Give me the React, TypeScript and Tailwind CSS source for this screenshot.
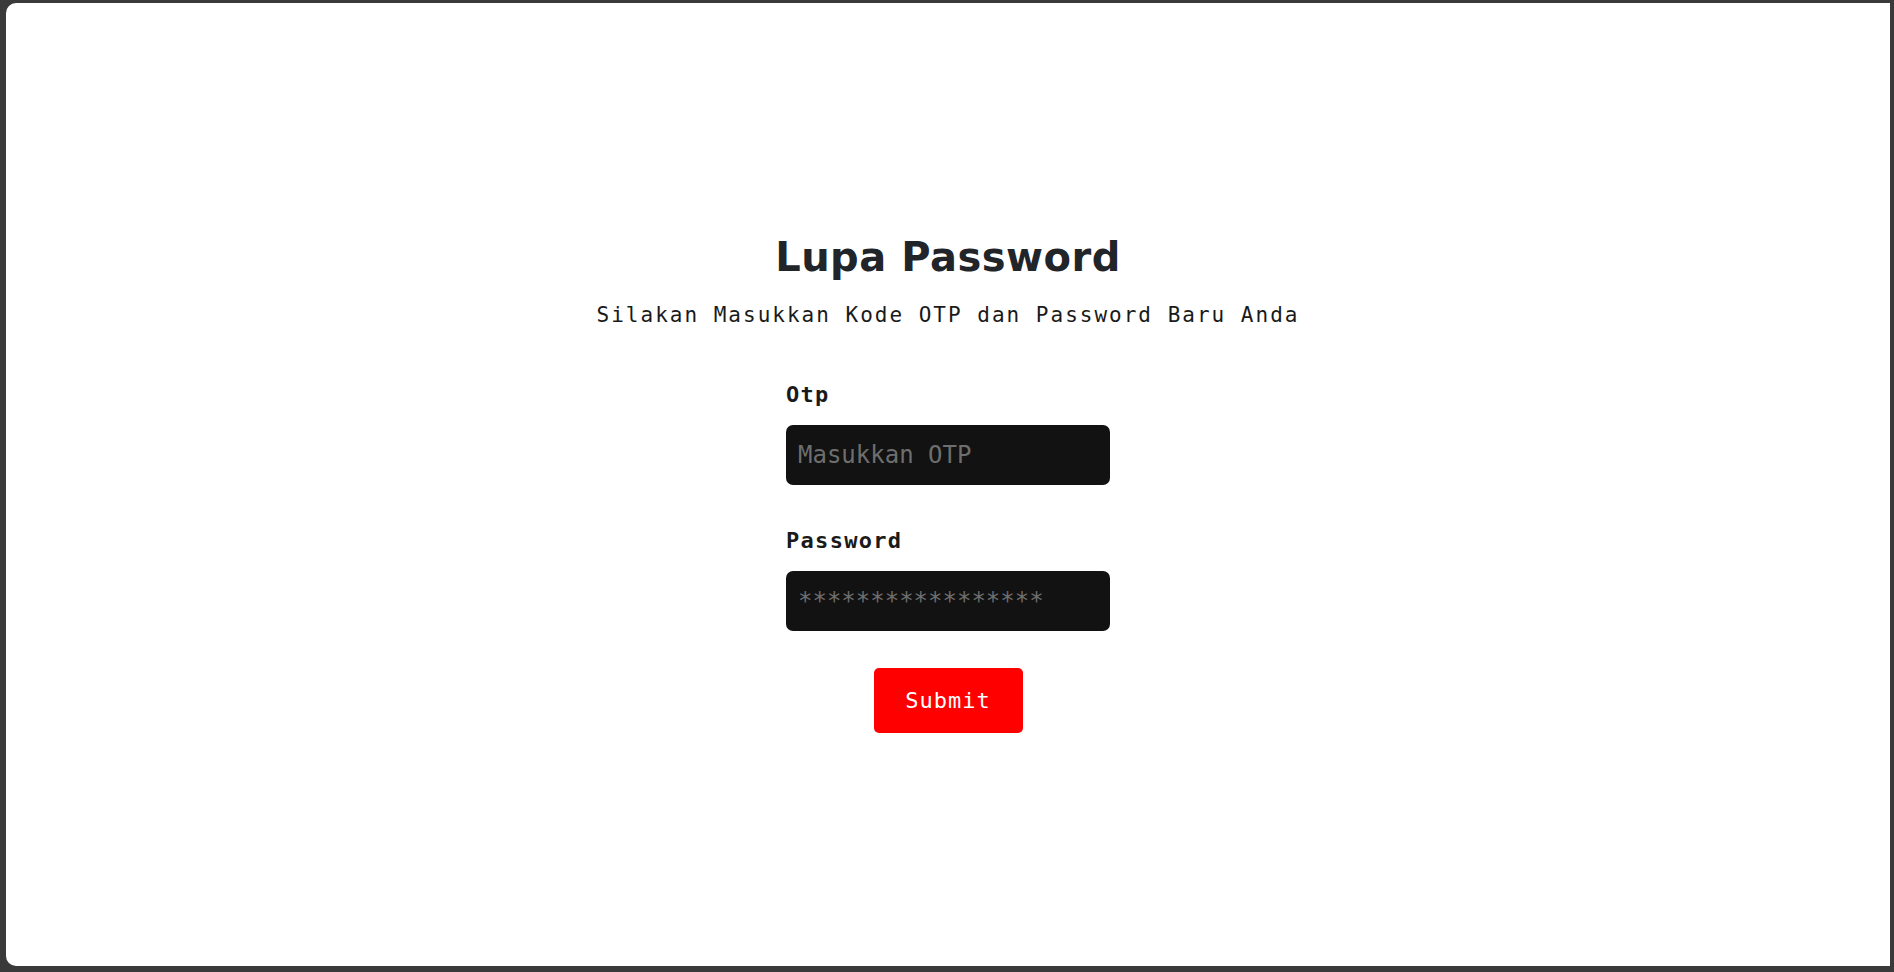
import React, { useState } from 'react';

const mono = "font-['DejaVu_Sans_Mono','Liberation_Mono',monospace]";

const App: React.FC = () => {
  const [otp, setOtp] = useState('');
  const [password, setPassword] = useState('');

  return (
    <div className="h-screen w-full bg-[#3a3a3a] pt-[3px] pl-[6px] pr-[4px] pb-[6px]">
      <div className="h-full w-full bg-white rounded-l-[10px] flex flex-col items-center justify-center">
        {/* Heading */}
        <h1 className="font-['DejaVu_Sans',sans-serif] font-bold text-[40px] leading-[40px] tracking-[0.5px] text-[#212529]">
          Lupa Password
        </h1>
        <p className={`${mono} mt-[26px] text-[21px] leading-[24px] tracking-[2px] text-[#1a1a1a]`}>
          Silakan Masukkan Kode OTP dan Password Baru Anda
        </p>

        {/* Form */}
        <form className="mt-[56px] w-[324px] flex flex-col" onSubmit={(e) => e.preventDefault()}>
          <label className={`${mono} font-bold text-[22px] leading-[24px] tracking-[1.3px] text-[#1a1a1a]`}>
            Otp
          </label>
          <input
            type="text"
            placeholder="Masukkan OTP"
            value={otp}
            onChange={(e) => setOtp(e.target.value)}
            className={`${mono} mt-[18px] h-[60px] w-full rounded-[7px] bg-[#121212] pl-3 text-[24px] text-white placeholder:text-[#6e6e6e] outline-none`}
          />

          <label className={`${mono} mt-[44px] font-bold text-[22px] leading-[24px] tracking-[1.3px] text-[#1a1a1a]`}>
            Password
          </label>
          <input
            type="password"
            placeholder="*****************"
            value={password}
            onChange={(e) => setPassword(e.target.value)}
            className={`${mono} mt-[18px] h-[60px] w-full rounded-[7px] bg-[#121212] pl-3 text-[24px] text-white placeholder:text-[#6e6e6e] outline-none`}
          />

          <div className="mt-[37px] flex justify-center">
            <button
              type="submit"
              className={`${mono} h-[65px] w-[149px] rounded-[5px] bg-[#ff0000] text-[22px] tracking-[1px] text-white flex items-center justify-center`}
            >
              Submit
            </button>
          </div>
        </form>
      </div>
    </div>
  );
};

export default App;
